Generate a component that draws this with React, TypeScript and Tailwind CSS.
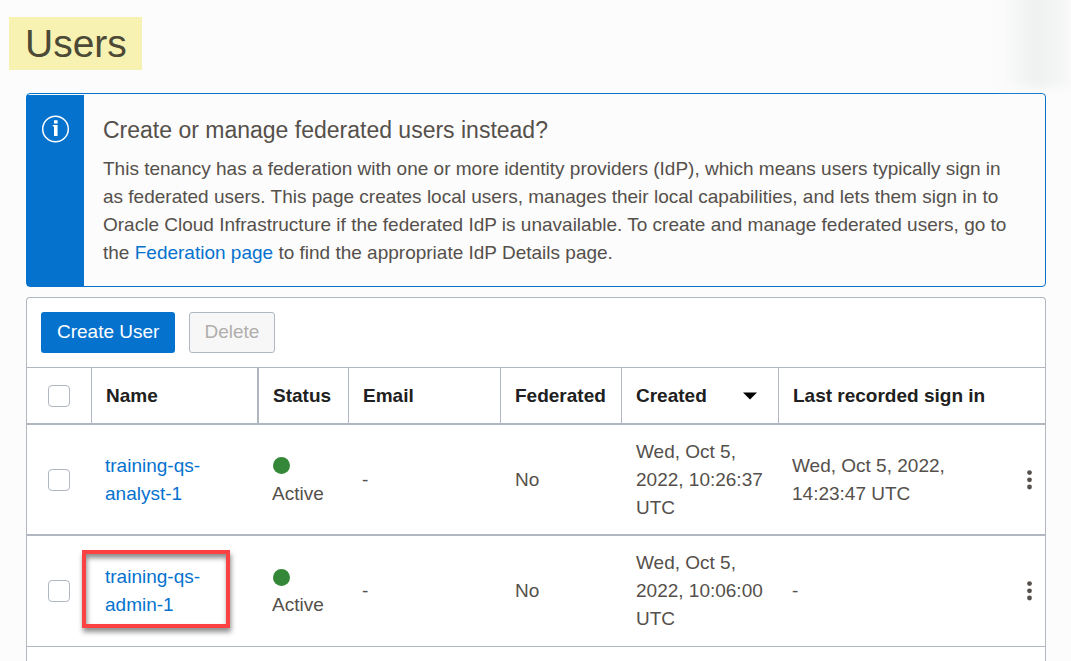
import React from "react";

interface User {
  name: string[];
  email: string;
  federated: string;
  created: string[];
  lastSignIn: string[];
  highlighted?: boolean;
}

const users: User[] = [
  {
    name: ["training-qs-", "analyst-1"],
    email: "-",
    federated: "No",
    created: ["Wed, Oct 5,", "2022, 10:26:37", "UTC"],
    lastSignIn: ["Wed, Oct 5, 2022,", "14:23:47 UTC"],
  },
  {
    name: ["training-qs-", "admin-1"],
    email: "-",
    federated: "No",
    created: ["Wed, Oct 5,", "2022, 10:06:00", "UTC"],
    lastSignIn: ["-"],
    highlighted: true,
  },
];

function Lines({ text }: { text: string[] }) {
  return (
    <>
      {text.map((line) => (
        <span key={line} className="block whitespace-nowrap">
          {line}
        </span>
      ))}
    </>
  );
}

function Checkbox({ label }: { label: string }) {
  return (
    <input
      type="checkbox"
      aria-label={label}
      className="mx-auto block size-[22px] appearance-none rounded border border-[#b0b7c0] bg-white checked:bg-[#0572ce]"
    />
  );
}

function InfoBanner() {
  return (
    <section className="flex rounded border border-[#0572ce]">
      <div className="mt-px flex w-[57px] shrink-0 justify-center bg-[#0572ce] pt-5">
        <svg width="28" height="28" viewBox="0 0 28 28" fill="none" aria-hidden="true">
          <circle cx="13.5" cy="14" r="12.8" stroke="white" strokeWidth="1.5" />
          <path d="M12 5.2h3.6v3.4H12z M10.8 10h4.8v11H12v-9.4h-1.2z" fill="white" />
        </svg>
      </div>
      <div className="pt-5 pr-6 pb-[19px] pl-[19px]">
        <h2 className="text-[23px] leading-8">Create or manage federated users instead?</h2>
        <p className="mt-[9px] leading-7">
          This tenancy has a federation with one or more identity providers (IdP), which means users
          typically sign in as federated users. This page creates local users, manages their local
          capabilities, and lets them sign in to Oracle Cloud Infrastructure if the federated IdP is
          unavailable. To create and manage federated users, go to the{" "}
          <a href="#federation" className="text-[#0572ce]">
            Federation page
          </a>{" "}
          to find the appropriate IdP Details page.
        </p>
      </div>
    </section>
  );
}

function UserRow({ user, last }: { user: User; last: boolean }) {
  const line = last ? "border-b border-[#b0b7c0]" : "border-b-2 border-[#b0b7c0]";
  return (
    <tr className="h-[111px]">
      <td className={`pr-px ${line}`}>
        <Checkbox label={`Select ${user.name.join("")}`} />
      </td>
      <td className={`relative pl-[13px] ${line}`}>
        <a href="#user" className="text-[#0572ce]">
          <Lines text={user.name} />
        </a>
        {user.highlighted && (
          <div className="pointer-events-none absolute top-3.5 -left-2.5 h-[78px] w-[148px] border-4 border-[#fb4141] shadow-[1px_4px_5px_rgba(0,0,0,0.45),inset_1px_4px_5px_rgba(0,0,0,0.45)]" />
        )}
      </td>
      <td className={`pl-[13px] ${line}`}>
        <span className="flex h-7 items-center">
          <span className="ml-px size-[17px] rounded-full bg-[#358738]" />
        </span>
        <span className="block">Active</span>
      </td>
      <td className={`pl-[13px] ${line}`}>{user.email}</td>
      <td className={`pl-3.5 ${line}`}>{user.federated}</td>
      <td className={`pl-3.5 ${line}`}>
        <Lines text={user.created} />
      </td>
      <td className={`pl-[13px] ${line}`}>
        <Lines text={user.lastSignIn} />
      </td>
      <td className={line}>
        <button type="button" aria-label="Actions" className="mx-auto block">
          <svg width="6" height="20" viewBox="0 0 6 20" fill="#55504b" aria-hidden="true">
            <circle cx="3.5" cy="2.6" r="2.4" />
            <circle cx="3.5" cy="9.8" r="2.4" />
            <circle cx="3.5" cy="17" r="2.4" />
          </svg>
        </button>
      </td>
    </tr>
  );
}

export default function App() {
  const head = "border-b-2 border-[#b0b7c0] pl-3.5 text-left font-bold whitespace-nowrap";
  return (
    <div className="relative flex min-h-screen flex-col overflow-hidden bg-[#fcfcfc] pr-[25px] pl-[26px] font-['Liberation_Sans',Arial,sans-serif] text-[19px] leading-7 text-[#55504b]">
      <div className="pointer-events-none absolute -top-4 right-0 h-[104px] w-[72px] bg-linear-to-r from-[#fcfcfc] via-[#eef1f0] via-55% to-[#f8f8f8] blur-[4px]" />
      <h1 className="mt-[17px] -ml-[17px] self-start bg-[#f7f2b1] pr-[15px] pl-4 text-[39px] leading-[53px] text-[#4c4936]">
        Users
      </h1>
      <div className="mt-[23px]">
        <InfoBanner />
      </div>
      <section className="mt-2.5 flex-1 rounded-t border border-b-0 border-[#b0b7c0] bg-white">
        <div className="flex gap-3.5 p-3.5">
          <button type="button" className="h-[41px] rounded-[3px] bg-[#0572ce] px-4 pb-0.5 text-white">
            Create User
          </button>
          <button
            type="button"
            disabled
            className="h-[41px] rounded-[3px] border border-[#b0b7c0] bg-[#f7f7f7] pr-[15px] pb-0.5 pl-3.5 text-[#b0aeac]"
          >
            Delete
          </button>
        </div>
        <table className="w-full table-fixed border-separate border-spacing-0 border-t border-[#b0b7c0]">
          <colgroup>
            <col className="w-[65px]" />
            <col className="w-[167px]" />
            <col className="w-[90px]" />
            <col className="w-[152px]" />
            <col className="w-[121px]" />
            <col className="w-[157px]" />
            <col />
            <col className="w-[32px]" />
          </colgroup>
          <thead className="text-[#202020]">
            <tr className="h-[57px]">
              <th className="border-r border-b-2 border-[#b0b7c0]">
                <Checkbox label="Select all users" />
              </th>
              <th className={`border-r-2 ${head}`}>Name</th>
              <th className={`border-r ${head}`}>Status</th>
              <th className={`border-r ${head}`}>Email</th>
              <th className={`border-r ${head}`}>Federated</th>
              <th className={`border-r ${head}`}>
                <button type="button" className="flex w-full items-center justify-between pr-[21px]">
                  Created
                  <svg width="14" height="8" viewBox="0 0 14 8" fill="black" aria-hidden="true">
                    <path d="M0 .5h14L7 7.5z" />
                  </svg>
                </button>
              </th>
              <th colSpan={2} className={head}>
                Last recorded sign in
              </th>
            </tr>
          </thead>
          <tbody>
            {users.map((user, index) => (
              <UserRow key={user.name.join("")} user={user} last={index === users.length - 1} />
            ))}
          </tbody>
        </table>
      </section>
    </div>
  );
}
